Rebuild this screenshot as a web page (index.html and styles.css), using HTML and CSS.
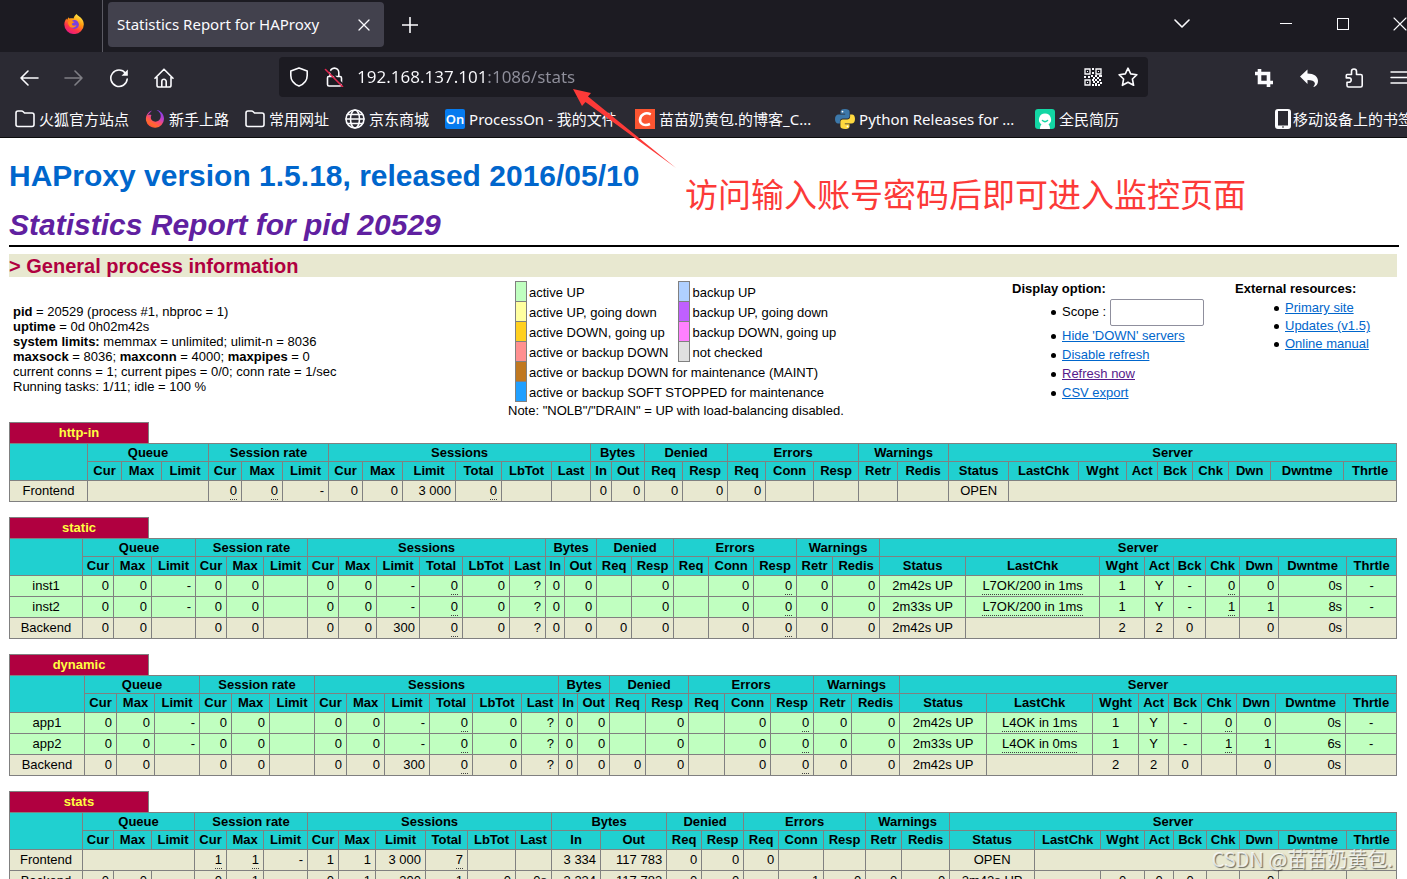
FILE: index.html
```
<!DOCTYPE html>
<html lang="zh-CN">
<head>
<meta charset="utf-8">
<title>Statistics Report for HAProxy</title>
<link rel="stylesheet" href="styles.css">
</head>
<body>
<div class="window">
  <header class="chrome">
    <div class="tabbar">
      <div class="fx-view">
        <svg class="icon-20" viewBox="0 0 20 20" aria-hidden="true">
          <defs>
            <linearGradient id="fxBody" x1="0.8" y1="0" x2="0.25" y2="1"><stop offset="0" stop-color="#fff44f"/><stop offset="0.4" stop-color="#ff980e"/><stop offset="0.7" stop-color="#ff3647"/><stop offset="1" stop-color="#e31587"/></linearGradient>
            <linearGradient id="fxRing" x1="0.8" y1="0" x2="0.2" y2="1"><stop offset="0" stop-color="#7a3df0"/><stop offset="0.35" stop-color="#c040c8"/><stop offset="0.6" stop-color="#ff4f5e"/><stop offset="0.8" stop-color="#ff6a2a"/><stop offset="1" stop-color="#ff3750"/></linearGradient>
          </defs>
          <path d="M12.500 0c1 2 4.500 3.200 5.600 5.200 1.200 1.600 1.700 3.400 1.700 5.300a9.700 9.500 0 0 1-19.500 0c0-2.500 1-4.500 2.100-6l.6 1.400 1.500-2.700.8 1.200C6.500 4.200 8 4 9.500 4.500 10 2.800 11 1 12.500 0z" fill="url(#fxBody)"/>
          <circle cx="10.500" cy="10.500" r="4.400" fill="#7a3fe0"/>
          <path d="M4 8c2-2 4.500-1 6.500.3-1 .9-2.500.7-2.700 1.800.3 1.700 2.700 2.200 4.700.8-1 3.400-6.500 4.100-8-.1-.4-1-.6-2-.5-2.800z" fill="#ff8a16"/>
        </svg>
      </div>
      <div class="tab">
        <span class="tab-title">Statistics Report for HAProxy</span>
        <button class="tab-close" aria-label="Close tab"><svg width="12" height="12" viewBox="0 0 12 12"><path d="M1 1l10 10M11 1L1 11"/></svg></button>
      </div>
      <button class="new-tab" aria-label="New tab"><svg width="16" height="16" viewBox="0 0 16 16"><path d="M8 0.500v15M0.500 8h15"/></svg></button>
      <div class="tab-space"></div>
      <button class="win-btn" aria-label="List all tabs"><svg width="16" height="10" viewBox="0 0 16 10"><path d="M1 1l7 7 7-7"/></svg></button>
      <div class="win-controls">
        <button class="win-btn" aria-label="Minimize"><svg width="12" height="12" viewBox="0 0 12 12"><path class="crisp" d="M0 5.500h12"/></svg></button>
        <button class="win-btn" aria-label="Maximize"><svg width="12" height="12" viewBox="0 0 12 12"><path class="crisp" d="M.5.500h11v11H.5z"/></svg></button>
        <button class="win-btn" aria-label="Close"><svg width="14" height="14" viewBox="0 0 14 14"><path class="thin" d="M1 1l12 12M13 1L1 13"/></svg></button>
      </div>
    </div>

    <div class="navbar">
      <div class="nav-group">
        <button class="nav-btn" aria-label="Back"><svg class="icon-20" viewBox="0 0 20 20"><path d="M19 10H2M9 3l-7 7 7 7"/></svg></button>
        <button class="nav-btn disabled" aria-label="Forward" disabled><svg class="icon-20" viewBox="0 0 20 20"><path d="M1 10h17M11 3l7 7-7 7"/></svg></button>
        <button class="nav-btn" aria-label="Reload"><svg class="icon-20" viewBox="0 0 20 20"><path d="M16.500 5.200A8.200 8.200 0 1 0 18.200 11"/><path class="solid" d="M18.800 1.500v6.300h-6.300z"/></svg></button>
        <button class="nav-btn" aria-label="Home"><svg class="icon-20" viewBox="0 0 20 20"><path d="M1 10.300L10 1.200l9 9.100M3 9v8.200q0 1.800 1.800 1.800h10.400q1.800 0 1.800-1.800V9M7.800 19v-5.500a2.200 2.200 0 0 1 4.400 0V19"/></svg></button>
      </div>
      <div class="urlbar">
        <button class="url-icon" aria-label="Tracking protection"><svg class="icon-20" viewBox="0 0 20 20"><path d="M10 .9l8.200 3v4.600c0 4.400-2.500 8.300-8.200 10.600C4.300 16.800 1.800 12.900 1.800 8.500V3.900z"/></svg></button>
        <button class="url-icon" aria-label="Connection not secure"><svg class="icon-20" viewBox="0 0 20 20"><path d="M6 9V5.500a4.400 4.400 0 0 1 8.800 0V9M4.500 9.500h11.500q1.500 0 1.500 1.500v6.500q0 1.500-1.500 1.500h-11q-1.500 0-1.500-1.500V11q0-1.500 1-1.500z"/><path class="slash-gap" d="M3 1.500l17 17"/><path class="slash" d="M1.500 2.500l17 17"/></svg></button>
        <input class="url-input" type="text" aria-label="Address" value="192.168.137.101:1086/stats">
        <button class="url-icon" aria-label="QR code"><svg class="icon-18" viewBox="0 0 18 18"><path class="crisp qr" d="M1 1h5v5H1zM12 1h5v5h-5zM1 12h5v5H1z"/><path class="solid" d="M3 3h1v1H3zM14 3h1v1h-1zM3 14h1v1H3zM8 0h2v2H8zM8 4h2v2H8zM0 8h2v2H0zM4 8h2v2H4zM7 7h2v2H7zM9 9h2v2H9zM11 7h2v2h-2zM13 9h2v2h-2zM15 7h3v2h-3zM8 11h2v2H8zM11 11h2v2h-2zM15 11h2v2h-2zM9 13h2v2H9zM13 13h2v2h-2zM16 14h2v2h-2zM8 16h2v2H8zM11 15h2v3h-2zM14 16h2v2h-2z"/></svg></button>
        <button class="url-icon" aria-label="Bookmark this page"><svg class="icon-20" viewBox="0 0 20 20"><path d="M10 1.200l2.700 5.700 6.200.8-4.500 4.300 1.200 6.300L10 15.200l-5.600 3.100 1.200-6.300L1.100 7.700l6.200-.8z"/></svg></button>
      </div>
      <div class="nav-group nav-right">
        <button class="nav-btn" aria-label="Screenshot"><svg class="icon-18" viewBox="0 0 18 18"><path class="heavy" d="M4.500 0v13.500H18M0 4.500h13.500V18"/></svg></button>
        <button class="nav-btn" aria-label="Undo"><svg class="icon-18" viewBox="0 0 18 18"><path class="solid" d="M7.500.5v4C14 4.500 18 7.500 18 12c0 3-1.500 5-4 6l-.6-.6c1.400-1.400 1.600-2.600 1.400-3.400-.4-1.900-3-3-7.300-3v4L0 7.500z"/></svg></button>
        <button class="nav-btn" aria-label="Extensions"><svg class="icon-20" viewBox="0 0 20 20"><path d="M3 6.500h4.500V3.500a2.500 2.500 0 0 1 5 0v3h4.200q1.500 0 1.500 1.500v9.500q0 1.500-1.500 1.500H4.500Q3 19 3 17.500v-3.200h2a2.200 2.200 0 0 0 0-4.400H2.300V7.500q0-1 .7-1z"/></svg></button>
        <button class="nav-btn" aria-label="Menu"><svg class="icon-18" viewBox="0 0 18 18"><path class="menu" d="M1 3h16M1 8.500h16M1 14h16"/></svg></button>
      </div>
    </div>

    <nav class="bookmarks" aria-label="Bookmarks">
      <a class="bookmark" href="#"><svg class="icon-20" viewBox="0 0 20 20"><path d="M1 15.500V4q0-2 2-2h3.500q1 0 1.800.8L9.500 4H17q2 0 2 2v9.500q0 2-2 2H3q-2 0-2-2z"/></svg>火狐官方站点</a>
      <a class="bookmark" href="#"><svg class="icon-20" viewBox="0 0 20 20"><path d="M7 1.500C2.500 3 .5 7 1 11.500a9.100 9.100 0 0 0 18-1.500C19 5.500 16 1.500 11.500 1c3 1.500 4.700 4 4.200 7-.6 3.400-3.500 5.200-6.500 4.500C6 11.800 5 8.500 6.500 6 4.500 5.500 3 6 2.500 6.500z" fill="url(#fxRing)" class="no-stroke"/></svg>新手上路</a>
      <a class="bookmark" href="#"><svg class="icon-20" viewBox="0 0 20 20"><path d="M1 15.500V4q0-2 2-2h3.500q1 0 1.800.8L9.500 4H17q2 0 2 2v9.500q0 2-2 2H3q-2 0-2-2z"/></svg>常用网址</a>
      <a class="bookmark" href="#"><svg class="icon-20" viewBox="0 0 20 20"><circle cx="10" cy="10" r="9"/><ellipse cx="10" cy="10" rx="4.500" ry="9"/><path d="M1 10h18M2.500 5.500h15M2.500 14.500h15"/></svg>京东商城</a>
      <a class="bookmark medium" href="#"><span class="badge-on">On</span>ProcessOn - 我的文件</a>
      <a class="bookmark wide" href="#"><svg class="icon-20" viewBox="0 0 20 20"><path class="no-stroke" fill="#fc5531" d="M0 0h20v20H0z"/><path class="csdn-c" d="M15.800 5.300C10.500 2.700 5.500 5.500 5 10.500c-.4 4.600 4.500 6.800 10 4.500"/></svg>苗苗奶黄包.的博客_C...</a>
      <a class="bookmark wide" href="#"><svg class="icon-20" viewBox="0 0 20 20"><path class="no-stroke" fill="#3c78aa" d="M9.900 0C6.500 0 5.500 1.200 5.500 2.700v2h4.700v.8H3.500C1.500 5.500 0 7 0 10s1.300 4.400 3 4.400h1.900v-2.200c0-1.700 1.300-2.800 2.900-2.800h4.500c1.400 0 2.300-1.100 2.300-2.400V2.700C14.600 1 12.900 0 9.900 0z"/><path class="no-stroke" fill="#ffd93f" d="M10.100 20c3.400 0 4.400-1.200 4.400-2.700v-2H9.800v-.8h6.700c2 0 3.500-1.500 3.500-4.500s-1.300-4.400-3-4.400h-1.900v2.200c0 1.700-1.300 2.800-2.900 2.800H7.700c-1.400 0-2.300 1.100-2.300 2.400v4.300c0 1.700 1.700 2.700 4.700 2.700z"/><circle class="no-stroke" cx="7.500" cy="2.600" r="0.900" fill="#fff"/><circle class="no-stroke" cx="12.500" cy="17.400" r="0.900" fill="#fff"/></svg>Python Releases for ...</a>
      <a class="bookmark" href="#"><svg class="icon-20" viewBox="0 0 20 20"><rect class="no-stroke" width="20" height="20" rx="3" fill="#13d6a4"/><path class="no-stroke" fill="#fff" d="M10 4.500a6 6 0 0 1 3.500 10.900c.9.700 1.500 2 1.500 4.600H5c0-2.600.6-3.900 1.500-4.600A6 6 0 0 1 10 4.500z"/><path class="smile" d="M7.500 11.500q2.500 2.200 5 0"/></svg>全民简历</a>
      <a class="bookmark bookmark-mobile" href="#"><svg width="16" height="20" viewBox="0 0 16 20"><path class="no-stroke" fill="#fbfbfe" fill-rule="evenodd" d="M3 0h10q3 0 3 3v14q0 3-3 3H3q-3 0-3-3V3q0-3 3-3zm0 2v14.500h10V2zm4 15.500v1h2v-1z"/></svg>移动设备上的书签</a>
    </nav>
  </header>

  <main class="page">
    <h1><a href="#">HAProxy version 1.5.18, released 2016/05/10</a></h1>
    <h2><a href="#">Statistics Report for pid 20529</a></h2>
    <hr>
    <div class="report">
      <h3>&gt; General process information</h3>
      <section class="summary">
        <p class="process">
          <b>pid</b> = 20529 (process #1, nbproc = 1)<br>
          <b>uptime</b> = 0d 0h02m42s<br>
          <b>system limits:</b> memmax = unlimited; ulimit-n = 8036<br>
          <b>maxsock</b> = 8036; <b>maxconn</b> = 4000; <b>maxpipes</b> = 0<br>
          current conns = 1; current pipes = 0/0; conn rate = 1/sec<br>
          Running tasks: 1/11; idle = 100 %
        </p>
        <div class="legend">
          <table class="lgd">
            <tr><td class="swatch active-up"></td><td>active UP</td><td class="swatch backup-up"></td><td>backup UP</td></tr>
            <tr><td class="swatch active-going-down"></td><td>active UP, going down</td><td class="swatch backup-going-down"></td><td>backup UP, going down</td></tr>
            <tr><td class="swatch active-going-up"></td><td>active DOWN, going up</td><td class="swatch backup-going-up"></td><td>backup DOWN, going up</td></tr>
            <tr><td class="swatch down"></td><td>active or backup DOWN</td><td class="swatch unchecked"></td><td>not checked</td></tr>
            <tr><td class="swatch maint"></td><td colspan="3">active or backup DOWN for maintenance (MAINT)</td></tr>
            <tr><td class="swatch stopped"></td><td colspan="3">active or backup SOFT STOPPED for maintenance</td></tr>
          </table>
          <p class="note">Note: "NOLB"/"DRAIN" = UP with load-balancing disabled.</p>
        </div>
        <div class="options">
          <b>Display option:</b>
          <ul>
            <li><label for="scope">Scope :</label> <input id="scope" class="scope" type="text"></li>
            <li><a href="#">Hide 'DOWN' servers</a></li>
            <li><a href="#">Disable refresh</a></li>
            <li><a class="visited" href="#">Refresh now</a></li>
            <li><a href="#">CSV export</a></li>
          </ul>
        </div>
        <div class="resources">
          <b>External resources:</b>
          <ul>
            <li><a href="#">Primary site</a></li>
            <li><a href="#">Updates (v1.5)</a></li>
            <li><a href="#">Online manual</a></li>
          </ul>
        </div>
      </section>

      <section class="proxy">
        <h4>http-in</h4>
        <table class="tbl">
          <colgroup><col width="78"><col width="34"><col width="40"><col width="47"><col width="33"><col width="41"><col width="46"><col width="34"><col width="40"><col width="53"><col width="46"><col width="50"><col width="39"><col width="21"><col width="33"><col width="38"><col width="45"><col width="38"><col width="48"><col width="45"><col width="39"><col width="51"><col width="60"><col width="70"><col width="48"><col width="31"><col width="35"><col width="36"><col width="42"><col width="73"><col width="53"></colgroup>
          <thead>
            <tr class="group"><th rowspan="2"></th><th colspan="3">Queue</th><th colspan="3">Session rate</th><th colspan="6">Sessions</th><th colspan="2">Bytes</th><th colspan="2">Denied</th><th colspan="3">Errors</th><th colspan="2">Warnings</th><th colspan="9">Server</th></tr>
            <tr class="names"><th>Cur</th><th>Max</th><th>Limit</th><th>Cur</th><th>Max</th><th>Limit</th><th>Cur</th><th>Max</th><th>Limit</th><th>Total</th><th>LbTot</th><th>Last</th><th>In</th><th>Out</th><th>Req</th><th>Resp</th><th>Req</th><th>Conn</th><th>Resp</th><th>Retr</th><th>Redis</th><th>Status</th><th>LastChk</th><th>Wght</th><th>Act</th><th>Bck</th><th>Chk</th><th>Dwn</th><th>Dwntme</th><th>Thrtle</th></tr>
          </thead>
          <tbody>
            <tr><td class="c">Frontend</td><td colspan="3"></td><td><u>0</u></td><td><u>0</u></td><td>-</td><td>0</td><td>0</td><td>3 000</td><td><u>0</u></td><td></td><td></td><td>0</td><td>0</td><td>0</td><td>0</td><td>0</td><td></td><td></td><td></td><td></td><td class="c">OPEN</td><td colspan="8"></td></tr>
          </tbody>
        </table>
      </section>

      <section class="proxy">
        <h4>static</h4>
        <table class="tbl">
          <colgroup><col width="73"><col width="31"><col width="38"><col width="44"><col width="31"><col width="37"><col width="44"><col width="31"><col width="38"><col width="43"><col width="43"><col width="47"><col width="36"><col width="19"><col width="32"><col width="35"><col width="42"><col width="35"><col width="45"><col width="43"><col width="36"><col width="47"><col width="86"><col width="134"><col width="45"><col width="29"><col width="32"><col width="34"><col width="39"><col width="68"><col width="50"></colgroup>
          <thead>
            <tr class="group"><th rowspan="2"></th><th colspan="3">Queue</th><th colspan="3">Session rate</th><th colspan="6">Sessions</th><th colspan="2">Bytes</th><th colspan="2">Denied</th><th colspan="3">Errors</th><th colspan="2">Warnings</th><th colspan="9">Server</th></tr>
            <tr class="names"><th>Cur</th><th>Max</th><th>Limit</th><th>Cur</th><th>Max</th><th>Limit</th><th>Cur</th><th>Max</th><th>Limit</th><th>Total</th><th>LbTot</th><th>Last</th><th>In</th><th>Out</th><th>Req</th><th>Resp</th><th>Req</th><th>Conn</th><th>Resp</th><th>Retr</th><th>Redis</th><th>Status</th><th>LastChk</th><th>Wght</th><th>Act</th><th>Bck</th><th>Chk</th><th>Dwn</th><th>Dwntme</th><th>Thrtle</th></tr>
          </thead>
          <tbody>
            <tr class="up"><td class="c">inst1</td><td>0</td><td>0</td><td>-</td><td>0</td><td>0</td><td></td><td>0</td><td>0</td><td>-</td><td><u>0</u></td><td>0</td><td>?</td><td>0</td><td>0</td><td></td><td>0</td><td></td><td>0</td><td><u>0</u></td><td>0</td><td>0</td><td class="c">2m42s UP</td><td class="c"><u>L7OK/200 in 1ms</u></td><td class="c">1</td><td class="c">Y</td><td class="c">-</td><td><u>0</u></td><td>0</td><td>0s</td><td class="c">-</td></tr>
            <tr class="up"><td class="c">inst2</td><td>0</td><td>0</td><td>-</td><td>0</td><td>0</td><td></td><td>0</td><td>0</td><td>-</td><td><u>0</u></td><td>0</td><td>?</td><td>0</td><td>0</td><td></td><td>0</td><td></td><td>0</td><td><u>0</u></td><td>0</td><td>0</td><td class="c">2m33s UP</td><td class="c"><u>L7OK/200 in 1ms</u></td><td class="c">1</td><td class="c">Y</td><td class="c">-</td><td><u>1</u></td><td>1</td><td>8s</td><td class="c">-</td></tr>
            <tr><td class="c">Backend</td><td>0</td><td>0</td><td></td><td>0</td><td>0</td><td></td><td>0</td><td>0</td><td>300</td><td><u>0</u></td><td>0</td><td>?</td><td>0</td><td>0</td><td>0</td><td>0</td><td></td><td>0</td><td><u>0</u></td><td>0</td><td>0</td><td class="c">2m42s UP</td><td></td><td class="c">2</td><td class="c">2</td><td class="c">0</td><td></td><td>0</td><td>0s</td><td></td></tr>
          </tbody>
        </table>
      </section>

      <section class="proxy">
        <h4>dynamic</h4>
        <table class="tbl">
          <colgroup><col width="75"><col width="32"><col width="38"><col width="45"><col width="32"><col width="38"><col width="45"><col width="32"><col width="38"><col width="45"><col width="43"><col width="49"><col width="37"><col width="19"><col width="32"><col width="36"><col width="43"><col width="36"><col width="46"><col width="43"><col width="38"><col width="48"><col width="87"><col width="106"><col width="46"><col width="30"><col width="33"><col width="35"><col width="39"><col width="70"><col width="51"></colgroup>
          <thead>
            <tr class="group"><th rowspan="2"></th><th colspan="3">Queue</th><th colspan="3">Session rate</th><th colspan="6">Sessions</th><th colspan="2">Bytes</th><th colspan="2">Denied</th><th colspan="3">Errors</th><th colspan="2">Warnings</th><th colspan="9">Server</th></tr>
            <tr class="names"><th>Cur</th><th>Max</th><th>Limit</th><th>Cur</th><th>Max</th><th>Limit</th><th>Cur</th><th>Max</th><th>Limit</th><th>Total</th><th>LbTot</th><th>Last</th><th>In</th><th>Out</th><th>Req</th><th>Resp</th><th>Req</th><th>Conn</th><th>Resp</th><th>Retr</th><th>Redis</th><th>Status</th><th>LastChk</th><th>Wght</th><th>Act</th><th>Bck</th><th>Chk</th><th>Dwn</th><th>Dwntme</th><th>Thrtle</th></tr>
          </thead>
          <tbody>
            <tr class="up"><td class="c">app1</td><td>0</td><td>0</td><td>-</td><td>0</td><td>0</td><td></td><td>0</td><td>0</td><td>-</td><td><u>0</u></td><td>0</td><td>?</td><td>0</td><td>0</td><td></td><td>0</td><td></td><td>0</td><td><u>0</u></td><td>0</td><td>0</td><td class="c">2m42s UP</td><td class="c"><u>L4OK in 1ms</u></td><td class="c">1</td><td class="c">Y</td><td class="c">-</td><td><u>0</u></td><td>0</td><td>0s</td><td class="c">-</td></tr>
            <tr class="up"><td class="c">app2</td><td>0</td><td>0</td><td>-</td><td>0</td><td>0</td><td></td><td>0</td><td>0</td><td>-</td><td><u>0</u></td><td>0</td><td>?</td><td>0</td><td>0</td><td></td><td>0</td><td></td><td>0</td><td><u>0</u></td><td>0</td><td>0</td><td class="c">2m33s UP</td><td class="c"><u>L4OK in 0ms</u></td><td class="c">1</td><td class="c">Y</td><td class="c">-</td><td><u>1</u></td><td>1</td><td>6s</td><td class="c">-</td></tr>
            <tr><td class="c">Backend</td><td>0</td><td>0</td><td></td><td>0</td><td>0</td><td></td><td>0</td><td>0</td><td>300</td><td><u>0</u></td><td>0</td><td>?</td><td>0</td><td>0</td><td>0</td><td>0</td><td></td><td>0</td><td><u>0</u></td><td>0</td><td>0</td><td class="c">2m42s UP</td><td></td><td class="c">2</td><td class="c">2</td><td class="c">0</td><td></td><td>0</td><td>0s</td><td></td></tr>
          </tbody>
        </table>
      </section>

      <section class="proxy">
        <h4>stats</h4>
        <table class="tbl">
          <colgroup><col width="73"><col width="31"><col width="38"><col width="43"><col width="32"><col width="37"><col width="44"><col width="31"><col width="37"><col width="50"><col width="42"><col width="48"><col width="36"><col width="49"><col width="66"><col width="35"><col width="42"><col width="35"><col width="45"><col width="42"><col width="36"><col width="48"><col width="85"><col width="66"><col width="44"><col width="29"><col width="33"><col width="33"><col width="39"><col width="68"><col width="50"></colgroup>
          <thead>
            <tr class="group"><th rowspan="2"></th><th colspan="3">Queue</th><th colspan="3">Session rate</th><th colspan="6">Sessions</th><th colspan="2">Bytes</th><th colspan="2">Denied</th><th colspan="3">Errors</th><th colspan="2">Warnings</th><th colspan="9">Server</th></tr>
            <tr class="names"><th>Cur</th><th>Max</th><th>Limit</th><th>Cur</th><th>Max</th><th>Limit</th><th>Cur</th><th>Max</th><th>Limit</th><th>Total</th><th>LbTot</th><th>Last</th><th>In</th><th>Out</th><th>Req</th><th>Resp</th><th>Req</th><th>Conn</th><th>Resp</th><th>Retr</th><th>Redis</th><th>Status</th><th>LastChk</th><th>Wght</th><th>Act</th><th>Bck</th><th>Chk</th><th>Dwn</th><th>Dwntme</th><th>Thrtle</th></tr>
          </thead>
          <tbody>
            <tr><td class="c">Frontend</td><td colspan="3"></td><td><u>1</u></td><td><u>1</u></td><td>-</td><td>1</td><td>1</td><td>3 000</td><td><u>7</u></td><td></td><td></td><td>3 334</td><td>117 783</td><td>0</td><td>0</td><td>0</td><td></td><td></td><td></td><td></td><td class="c">OPEN</td><td colspan="8"></td></tr>
            <tr><td class="c">Backend</td><td>0</td><td>0</td><td></td><td>0</td><td>1</td><td></td><td>0</td><td>1</td><td>300</td><td><u>1</u></td><td>0</td><td>0s</td><td>3 334</td><td>117 783</td><td>0</td><td>0</td><td></td><td>1</td><td><u>0</u></td><td>0</td><td>0</td><td class="c">2m42s UP</td><td></td><td class="c">0</td><td class="c">0</td><td class="c">0</td><td></td><td>0</td><td></td><td></td></tr>
          </tbody>
        </table>
      </section>
    </div>
  </main>

  <svg class="arrow" width="104" height="80" viewBox="0 0 104 80" aria-hidden="true"><path d="M0 0l18 4-3 3.500L103 79 12.500 13 9 17z"/></svg>
  <p class="callout">访问输入账号密码后即可进入监控页面</p>
  <p class="watermark">CSDN @苗苗奶黄包.</p>
</div>
</body>
</html>
```

FILE: styles.css
```
* {
  box-sizing: border-box;
}

body {
  margin: 0;
  background: #fff;
  color: #000;
  font: 13px/15px "Liberation Sans", Arial, sans-serif;
}

button {
  display: flex;
  align-items: center;
  justify-content: center;
  margin: 0;
  padding: 0;
  border: 0;
  background: none;
}

.window {
  position: relative;
  height: 100vh;
  overflow: hidden;
}

/* Browser chrome */
.chrome {
  border-bottom: 1px solid #0c0c0d;
  background: #2b2a33;
  color: #fbfbfe;
  font-family: "Noto Sans", "Noto Sans CJK SC", sans-serif;
}

.chrome svg {
  display: block;
  flex: none;
  fill: none;
  stroke: #fbfbfe;
  stroke-width: 1.6;
  stroke-linecap: round;
  stroke-linejoin: round;
}

.icon-20 {
  width: 20px;
  height: 20px;
}

.icon-18 {
  width: 18px;
  height: 18px;
}

.chrome .no-stroke,
.fx-view svg * {
  stroke: none;
}

.chrome .solid {
  fill: #fbfbfe;
  stroke: none;
}

.chrome .crisp {
  stroke-width: 1;
  stroke-linecap: butt;
  stroke-linejoin: miter;
  shape-rendering: crispEdges;
}

.chrome .qr {
  stroke-width: 1.3;
  shape-rendering: auto;
}

.chrome .thin {
  stroke-width: 1.1;
}

.chrome .menu {
  stroke-width: 1.4;
}

.chrome .heavy {
  stroke-width: 3.6;
  stroke-linecap: butt;
  stroke-linejoin: miter;
}

.chrome .smile {
  stroke: #13d6a4;
}

.tabbar {
  display: flex;
  align-items: center;
  height: 52px;
  overflow: hidden;
  background: #1c1b22;
}

.fx-view {
  display: flex;
  align-items: center;
  justify-content: flex-end;
  width: 103px;
  height: 52px;
  padding: 0 18px 4px 0;
  border-right: 1px solid #5b5a63;
}

.tab {
  display: flex;
  align-items: center;
  justify-content: space-between;
  width: 276px;
  height: 45px;
  margin: 0 18px 3px 5px;
  padding: 0 14px 0 9px;
  border-radius: 4px;
  background: #42414d;
}

.tab-title {
  padding-bottom: 2px;
  font-size: 15px;
  line-height: 24px;
  white-space: nowrap;
}

.tab-close svg {
  stroke-width: 1.3;
}

.new-tab {
  margin-bottom: 3px;
}

.tab-space {
  flex: 1;
}

.win-btn {
  width: 57px;
  height: 48px;
  margin-bottom: 4px;
}

.win-controls {
  display: flex;
  margin: 0 -21px 0 47px;
}

.navbar {
  display: flex;
  align-items: center;
  gap: 93px;
  height: 50px;
  padding-left: 6px;
  overflow: hidden;
}

.nav-group {
  display: flex;
}

.nav-right {
  margin-right: -14px;
}

.nav-btn {
  width: 45px;
  height: 40px;
  padding-top: 1px;
}

.disabled {
  opacity: 0.4;
}

.urlbar {
  display: flex;
  flex: 1;
  align-items: center;
  min-width: 0;
  height: 40px;
  padding: 0 3px 0 2px;
  border-radius: 4px;
  background: #1c1b22;
}

.url-icon {
  width: 35px;
  height: 40px;
}

.url-input {
  flex: 1;
  min-width: 0;
  height: 30px;
  padding: 0 6px;
  border: 0;
  outline: 0;
  background: linear-gradient(to right, #fbfbfe 135px, #8f8f9b 135px);
  -webkit-background-clip: text;
  background-clip: text;
  color: transparent;
  font: 17px/30px "Noto Sans", sans-serif;
}

.chrome .slash-gap {
  stroke: #1c1b22;
}

.chrome .slash {
  stroke: #e22850;
}

.bookmarks {
  display: flex;
  align-items: center;
  gap: 16px;
  height: 35px;
  padding: 0 0 1px 15px;
  overflow: hidden;
}

.bookmark {
  display: flex;
  flex: none;
  align-items: center;
  gap: 4px;
  color: #fbfbfe;
  font-size: 15px;
  line-height: 20px;
  text-decoration: none;
  white-space: nowrap;
}

.medium {
  min-width: 174px;
}

.wide {
  min-width: 184px;
}

.bookmark-mobile {
  gap: 2px;
  margin: 0 -6px 0 auto;
}

.badge-on {
  width: 20px;
  border-radius: 2px;
  background: #067bef;
  font-size: 13px;
  font-weight: 600;
  text-align: center;
}

.chrome .csdn-c {
  stroke: #fff;
  stroke-width: 2.6;
  stroke-linecap: butt;
}

/* Statistics page */
.page {
  padding: 19px 8px 0 9px;
}

.report {
  margin-right: 2px;
}

a {
  color: #0066cc;
}

.visited {
  color: #551a8b;
}

h1,
h2 {
  margin: 0;
  font-size: 30px;
  line-height: 38px;
}

h2 {
  margin-top: 11px;
  font-style: italic;
}

h1 a,
h2 a {
  text-decoration: none;
}

h2 a {
  color: #6020a0;
}

hr {
  height: 2px;
  margin: 1px 0 7px;
  border: 0;
  background: #000;
}

h3 {
  height: 23px;
  margin: 0;
  background: #e8e8d0;
  color: #b00040;
  font-size: 20px;
  line-height: 25px;
}

.summary {
  display: grid;
  grid-template-columns: 499fr 504fr 223fr 162fr;
  height: 145px;
}

.process {
  margin: 27px 0 0 4px;
}

.lgd {
  margin: 4px 0 0 7px;
  border-collapse: collapse;
}

.lgd td {
  height: 20px;
  padding: 2px 10px 0 2px;
}

.lgd .swatch {
  width: 11px;
  padding: 0;
  border: 1px solid #808080;
}

.active-up { background: #c0ffc0; }
.active-going-down { background: #ffffa0; }
.active-going-up { background: #ffd020; }
.down { background: #ff9090; }
.maint { background: #c07820; }
.stopped { background: #20a0ff; }
.backup-up { background: #b0d0ff; }
.backup-going-down { background: #c060ff; }
.backup-going-up { background: #ff80ff; }
.unchecked { background: #e0e0e0; }

.note {
  margin: 1px 0 0;
}

.options,
.resources {
  padding-top: 4px;
}

.options ul,
.resources ul {
  margin: 3px 0 0;
  padding: 0 0 0 39px;
  line-height: 18px;
  list-style: none;
}

.options ul {
  line-height: 19px;
}

.options li::before,
.resources li::before {
  content: "";
  display: inline-block;
  width: 5px;
  height: 5px;
  margin-right: 6px;
  border-radius: 50%;
  background: #000;
  vertical-align: middle;
}

.scope {
  width: 94px;
  height: 27px;
  border: 1px solid #8f8f9d;
  border-radius: 2px;
  vertical-align: middle;
}

.proxy {
  margin-bottom: 15px;
}

h4 {
  width: 140px;
  height: 21px;
  margin: 0;
  border: 1px solid #808080;
  border-bottom: 0;
  background: #b00040;
  color: #ffff40;
  font-size: 13px;
  line-height: 20px;
  text-align: center;
}

.tbl {
  width: 100%;
  table-layout: fixed;
  border-collapse: collapse;
}

.tbl th,
.tbl td {
  padding: 0 4px 2px;
  border: 1px solid #808080;
  text-align: right;
  white-space: nowrap;
}

.tbl th {
  padding: 0;
  background: #20d0d0;
  text-align: center;
}

.tbl .names th {
  padding-bottom: 2px;
}

.tbl .c {
  text-align: center;
}

.group {
  height: 18px;
}

.names {
  height: 19px;
}

.tbl tbody tr {
  height: 21px;
  background: #e8e8d0;
}

.tbl tbody .up {
  background: #c0ffc0;
}

.tbl u {
  padding-bottom: 1px;
  border-bottom: 1px dotted #404040;
  text-decoration: none;
}

/* Annotations over the window */
.arrow {
  position: absolute;
  top: 89px;
  left: 573px;
  fill: #fc3a38;
}

.callout {
  position: absolute;
  top: 173px;
  left: 685px;
  margin: 0;
  color: #fc3a38;
  font: 33px/40px "Noto Sans CJK SC", sans-serif;
  white-space: nowrap;
}

.watermark {
  position: absolute;
  right: 14px;
  bottom: 8px;
  margin: 0;
  color: rgba(255, 255, 255, 0.75);
  font: 20px/24px "Noto Sans CJK SC", sans-serif;
  text-shadow: 1px 1px 1px rgba(0, 0, 0, 0.55);
  white-space: nowrap;
}
```
